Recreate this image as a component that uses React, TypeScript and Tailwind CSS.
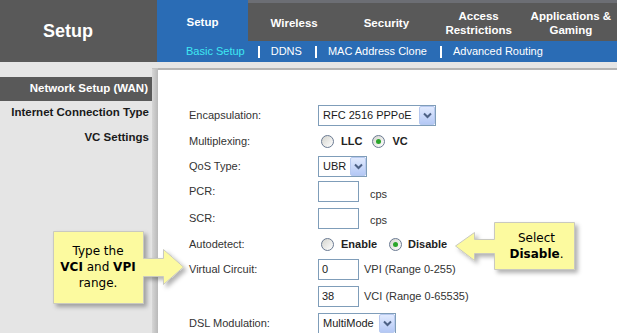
import React from 'react';

const tabs = [
  { label: 'Wireless' },
  { label: 'Security' },
  { label: 'Access\nRestrictions' },
  { label: 'Applications &\nGaming' },
];

const subItems = ['Basic Setup', 'DDNS', 'MAC Address Clone', 'Advanced Routing'];

function Select({ width, value }: { width: string; value: string }) {
  return (
    <div className={`${width} h-[21px] border border-[#7f9db9] bg-white flex items-center`}>
      <span className="flex-1 pl-[4px] text-[11px] text-[#1a1a1a] truncate">{value}</span>
      <span className="w-[16px] h-[19px] border border-[#b7c9ef] rounded-[2px] bg-linear-to-b from-[#e1eafe] to-[#b4c8f5] flex items-center justify-center">
        <svg width="9" height="7" viewBox="0 0 9 7">
          <path d="M1 1.5 L4.5 5 L8 1.5" fill="none" stroke="#4d6185" strokeWidth="2" />
        </svg>
      </span>
    </div>
  );
}

function Radio({ checked }: { checked?: boolean }) {
  return (
    <span className="w-[13px] h-[13px] rounded-full border border-[#6a7a92] bg-linear-to-br from-[#d4d4ce] to-white flex items-center justify-center">
      {checked && <span className="w-[5px] h-[5px] rounded-full bg-[#2aa52a]" />}
    </span>
  );
}

function TextBox({ value }: { value?: string }) {
  return (
    <div className="w-[41px] h-[21px] border border-[#7f9db9] bg-white pl-[3px] text-[11px] leading-[19px] text-[#1a1a1a]">
      {value}
    </div>
  );
}

function Row({ h, label, children }: { h: string; label?: string; children: React.ReactNode }) {
  return (
    <div className={`${h} flex items-center`}>
      <div className="w-[129px] text-[11px] text-[#333]">{label}</div>
      <div className="flex items-center">{children}</div>
    </div>
  );
}

export default function App() {
  return (
    <div className="relative w-[617px] h-[333px] overflow-hidden bg-white font-['Liberation_Sans',Arial,sans-serif]">
      {/* header */}
      <div className="flex h-[62px]">
        <div className="w-[157px] bg-[#595959] flex items-center pl-[43px]">
          <span className="text-white font-bold text-[18px]">Setup</span>
        </div>
        <div className="flex-1 flex flex-col">
          <div className="h-[41px] flex bg-[#595959] border-t-[3px] border-[#6c6e74]">
            <div className="w-[91px] -mt-[3px] bg-[#2a6cb5] flex items-center justify-center pt-[5px]">
              <span className="text-white font-bold text-[11.5px]">Setup</span>
            </div>
            {tabs.map((t) => (
              <div key={t.label} className="flex-1 flex items-center justify-center pt-[2px]">
                <span className="text-white font-bold text-[11.5px] leading-[14px] text-center whitespace-pre">{t.label}</span>
              </div>
            ))}
          </div>
          <div className="h-[21px] bg-[#2a6cb5] flex items-center pl-[29px] text-[11px]">
            {subItems.map((s, i) => (
              <React.Fragment key={s}>
                {i > 0 && <span className="w-[2px] h-[12px] bg-white ml-[13px] mr-[11px]" />}
                <span className={i === 0 ? 'text-[#3ee8f2]' : 'text-white'}>{s}</span>
              </React.Fragment>
            ))}
          </div>
        </div>
      </div>

      {/* body */}
      <div className="h-[6px] bg-[#e5e5e5]" />
      <div className="flex h-[265px]">
        <div className="w-[152px] bg-[#e5e5e5] pt-[9px]">
          <div className="h-[24px] bg-[#595959] flex items-center justify-end pr-[4px]">
            <span className="text-white font-bold text-[11.5px]">Network Setup (WAN)</span>
          </div>
          <div className="h-[23px] flex items-center justify-end pr-[3px] text-[11.5px] font-bold text-[#1a1a1a]">
            Internet Connection Type
          </div>
          <div className="h-[27px] flex items-center justify-end pr-[3px] text-[11.5px] font-bold text-[#1a1a1a]">
            VC Settings
          </div>
        </div>
        <div className="w-[6px] bg-linear-to-r from-[#d6d6d6] to-[#b9b9b9] border-t border-[#c4c4c4]" />
        <div className="flex-1 bg-white border-t-2 border-[#b4b4b4] pl-[31px] pt-[32px]">
          <Row h="h-[26px]" label="Encapsulation:">
            <Select width="w-[118px]" value="RFC 2516 PPPoE" />
          </Row>
          <Row h="h-[26px]" label="Multiplexing:">
            <span className="flex items-center ml-[3px]">
              <Radio />
              <span className="ml-[7px] text-[11px] font-bold text-[#222]">LLC</span>
              <span className="ml-[10px]"><Radio checked /></span>
              <span className="ml-[7px] text-[11px] font-bold text-[#222]">VC</span>
            </span>
          </Row>
          <Row h="h-[25px]" label="QoS Type:">
            <Select width="w-[49px]" value="UBR" />
          </Row>
          <Row h="h-[25px]" label="PCR:">
            <TextBox />
            <span className="ml-[11px] mt-[5px] text-[11px] text-[#333]">cps</span>
          </Row>
          <Row h="h-[28px]" label="SCR:">
            <TextBox />
            <span className="ml-[11px] mt-[5px] text-[11px] text-[#333]">cps</span>
          </Row>
          <Row h="h-[25px]" label="Autodetect:">
            <span className="flex items-center ml-[3px]">
              <Radio />
              <span className="ml-[7px] text-[11px] font-bold text-[#222]">Enable</span>
              <span className="ml-[12px]"><Radio checked /></span>
              <span className="ml-[6px] text-[11px] font-bold text-[#222]">Disable</span>
            </span>
          </Row>
          <Row h="h-[25px]" label="Virtual Circuit:">
            <TextBox value="0" />
            <span className="ml-[5px] text-[11px] text-[#333]">VPI (Range 0-255)</span>
          </Row>
          <Row h="h-[28px]">
            <TextBox value="38" />
            <span className="ml-[5px] text-[11px] text-[#333]">VCI (Range 0-65535)</span>
          </Row>
          <Row h="h-[26px]" label="DSL Modulation:">
            <Select width="w-[78px]" value="MultiMode" />
          </Row>
        </div>
      </div>

      {/* callouts */}
      <svg className="absolute left-0 top-0 pointer-events-none" width="617" height="333">
        <defs>
          <filter id="sh" x="-20%" y="-20%" width="140%" height="140%">
            <feDropShadow dx="3" dy="3" stdDeviation="2" floodColor="#000" floodOpacity="0.3" />
          </filter>
        </defs>
        <path
          d="M53.5,231.5 H143.5 V258.5 H163.5 V249.5 L183.5,267 L163.5,284.5 V276.5 H143.5 V303.5 H53.5 Z"
          fill="#fcfa9f"
          stroke="#c9c9c0"
          filter="url(#sh)"
        />
        <path
          d="M494.5,222.5 H574.5 V269.5 H494.5 V253.5 H474.5 V260.5 L455.5,246 L474.5,232.5 V239.5 H494.5 Z"
          fill="#fcfa9f"
          stroke="#c9c9c0"
          filter="url(#sh)"
        />
      </svg>
      <div className="absolute left-[53px] top-[231px] w-[90px] h-[72px] flex flex-col items-center justify-center text-[12px] leading-[16px] text-black font-['DejaVu_Sans',Verdana,sans-serif]">
        <span>Type the</span>
        <span><b>VCI</b> and <b>VPI</b></span>
        <span>range.</span>
      </div>
      <div className="absolute left-[494px] top-[222px] w-[80px] h-[47px] pl-[5px] flex flex-col items-center justify-center text-[12px] leading-[16px] text-black font-['DejaVu_Sans',Verdana,sans-serif]">
        <span>Select</span>
        <span><b>Disable</b>.</span>
      </div>
    </div>
  );
}
